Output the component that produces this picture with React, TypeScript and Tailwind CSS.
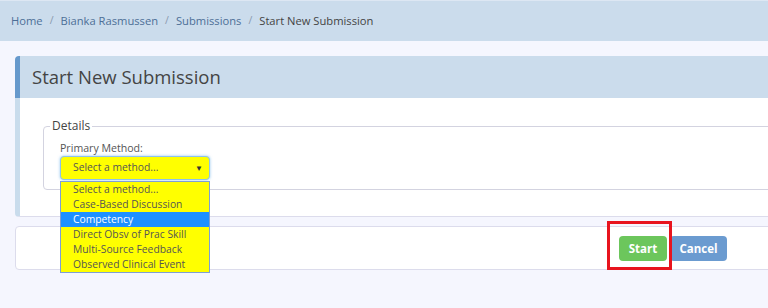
import React from "react";

const items = [
  "Select a method...",
  "Case-Based Discussion",
  "Competency",
  "Direct Obsv of Prac Skill",
  "Multi-Source Feedback",
  "Observed Clinical Event",
];

export default function App() {
  return (
    <div className="relative w-[768px] h-[308px] overflow-hidden bg-[#f5f6fe] font-['Open_Sans',sans-serif]">
      {/* breadcrumb */}
      <div className="h-[41px] bg-[#cbdcec] border-t border-[#dde7f3] flex items-center pl-[11px] text-[11.2px] text-[#4d6f97] gap-[7px]">
        <span>Home</span>
        <span className="text-[#8a9aae] text-[10.5px]">/</span>
        <span>Bianka Rasmussen</span>
        <span className="text-[#8a9aae] text-[10.5px]">/</span>
        <span>Submissions</span>
        <span className="text-[#8a9aae] text-[10.5px]">/</span>
        <span className="text-[#444]">Start New Submission</span>
      </div>

      <div className="pl-[15px] pt-[15px]">
        {/* main panel */}
        <div className="w-[800px]">
          <div className="h-[42px] bg-[#cbdcec] border-l-[5px] border-[#6699cc] rounded-tl-[4px] flex items-center pl-[12px] text-[18.5px] text-[#444]">
            Start New Submission
          </div>
          <div className="h-[119px] bg-white border-l-[5px] border-[#c9dcec] border-b border-b-[#dcdcec] rounded-bl-[4px] pt-[19px] pl-[23px]">
            <fieldset className="border border-[#d3d3e0] rounded-[4px] pl-[16px] pb-[9px] w-[760px]">
              <legend className="-ml-[10px] px-[2px] text-[12px] leading-[18px] text-[#444]">Details</legend>
              <div className="mt-[6px] mb-[1px] text-[10.6px] leading-[14px] text-[#555] font-medium">Primary Method:</div>
              <div className="relative w-[150px]">
                <div className="h-[24px] bg-[#ffff00] border border-[#8ec2ec] rounded-[4px] shadow-[0_0_3px_rgba(102,175,233,0.7)] flex items-center pl-[12px] pr-[6px] text-[10.3px] text-[#555]">
                  <span className="flex-1">Select a method...</span>
                  <span className="text-[8px] text-[#333]">▼</span>
                </div>
                <div className="absolute z-10 left-0 top-[25px] w-[150px] bg-[#ffff00] border border-[#7e9fd4]">
                  {items.map((it) => (
                    <div
                      key={it}
                      className={
                        it === "Competency"
                          ? "h-[15px] leading-[15px] pl-[12px] text-[10.3px] bg-[#1e90ff] text-white"
                          : "h-[15px] leading-[15px] pl-[12px] text-[10.3px] text-[#555]"
                      }
                    >
                      {it}
                    </div>
                  ))}
                </div>
              </div>
            </fieldset>
          </div>
        </div>

        {/* button panel */}
        <div className="mt-[9px] w-[800px] h-[44px] bg-white border border-[#dcdcec] rounded-[4px] pt-[9px] pl-[603px] flex gap-[3px]">
          <div className="w-[48px] h-[25px] rounded-[4px] bg-[#6cc65c] text-white font-bold text-[11.5px] flex items-center justify-center">
            Start
          </div>
          <div className="w-[57px] h-[25px] rounded-[4px] bg-[#6b9bd0] text-white font-bold text-[11.5px] flex items-center justify-center">
            Cancel
          </div>
        </div>
      </div>

      {/* red annotation box */}
      <div className="absolute left-[607px] top-[221px] w-[65px] h-[49px] border-[3px] border-[#e8141e]" />
    </div>
  );
}
